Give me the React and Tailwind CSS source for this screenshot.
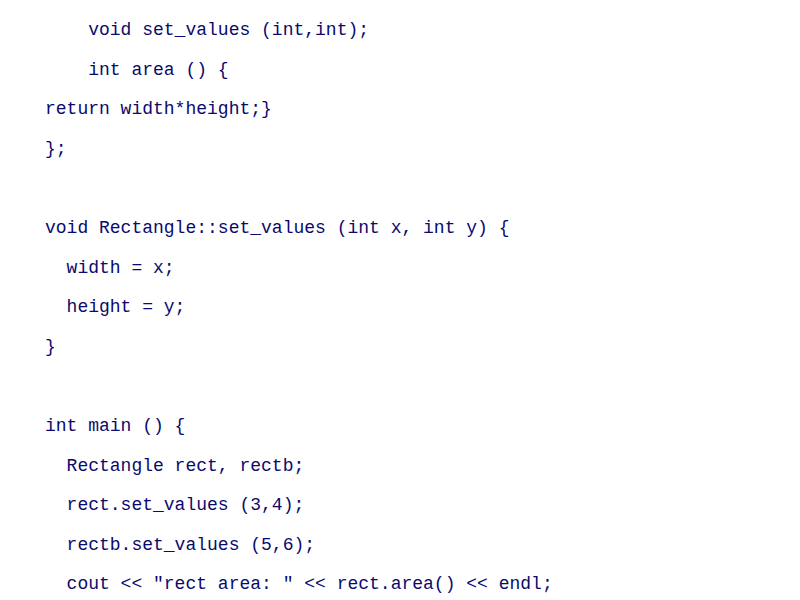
import React from 'react';

const lines = [
  '    void set_values (int,int);',
  '    int area () {',
  'return width*height;}',
  '};',
  '',
  'void Rectangle::set_values (int x, int y) {',
  '  width = x;',
  '  height = y;',
  '}',
  '',
  'int main () {',
  '  Rectangle rect, rectb;',
  '  rect.set_values (3,4);',
  '  rectb.set_values (5,6);',
  '  cout << "rect area: " << rect.area() << endl;',
];

const App = () => {
  return (
    <div className="w-[800px] h-[600px] overflow-hidden bg-white pl-[45px] pt-[11px]">
      <pre
        style={{ fontFamily: "'Liberation Mono', 'Courier New', monospace" }}
        className="text-[18px] leading-[39.6px] text-[#0a0a6e] whitespace-pre"
      >
        {lines.map((l, i) => (
          <div key={i} className="h-[39.6px]">{l}</div>
        ))}
      </pre>
    </div>
  );
};

export default App;
